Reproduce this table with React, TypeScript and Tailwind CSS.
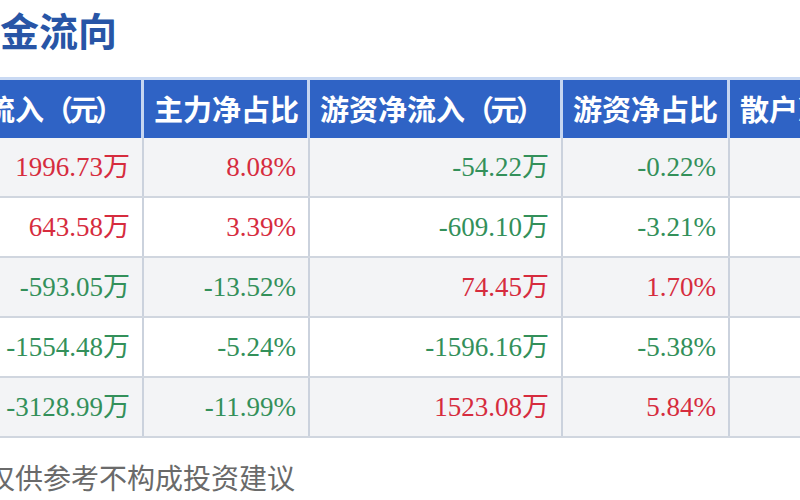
import React from "react";

type Cell = { v: string; up: boolean };

const rows: Cell[][] = [
  [{ v: "1996.73万", up: true }, { v: "8.08%", up: true }, { v: "-54.22万", up: false }, { v: "-0.22%", up: false }],
  [{ v: "643.58万", up: true }, { v: "3.39%", up: true }, { v: "-609.10万", up: false }, { v: "-3.21%", up: false }],
  [{ v: "-593.05万", up: false }, { v: "-13.52%", up: false }, { v: "74.45万", up: true }, { v: "1.70%", up: true }],
  [{ v: "-1554.48万", up: false }, { v: "-5.24%", up: false }, { v: "-1596.16万", up: false }, { v: "-5.38%", up: false }],
  [{ v: "-3128.99万", up: false }, { v: "-11.99%", up: false }, { v: "1523.08万", up: true }, { v: "5.84%", up: true }],
];

const cjk = { fontFamily: '"Noto Sans CJK SC", "Noto Sans", sans-serif' };
const serif = { fontFamily: '"Liberation Serif", "Noto Sans CJK SC", serif' };

function Head({ children }: { children: React.ReactNode }) {
  return (
    <div className="flex items-center pl-[10px] border-r-[3px] border-[#c6d6f0] text-white text-[29px] font-bold whitespace-nowrap overflow-hidden">
      {children}
    </div>
  );
}

function Yuan() {
  return <span className="tracking-[-3.5px]">（元）</span>;
}

export default function App() {
  return (
    <div className="w-[800px] h-[500px] overflow-hidden bg-white" style={cjk}>
      {/* title */}
      <div className="ml-[-39px] mt-[10px] text-[39px] leading-[39px] font-bold text-[#2855a6] whitespace-nowrap">
        资金流向
      </div>

      {/* table */}
      <div className="mt-[28px] ml-[-111px] w-[961px]">
        <div className="grid grid-cols-[255px_166px_253px_167px_120px] h-[61px] bg-[#2f63c5] border-t-[3px] border-[#c9d9f3]">
          <Head>主力净流入<Yuan /></Head>
          <Head>主力净占比</Head>
          <Head>游资净流入<Yuan /></Head>
          <Head>游资净占比</Head>
          <Head>散户净流入</Head>
        </div>
        {rows.map((r, i) => (
          <div
            key={i}
            className={`grid grid-cols-[255px_166px_253px_167px_120px] h-[60px] border-b-2 border-[#d0d6df] ${
              i % 2 === 0 ? "bg-[#f3f4f6]" : "bg-white"
            }`}
          >
            {r.map((c, j) => (
              <div
                key={j}
                className={`flex items-center justify-end pr-[12px] border-r-2 border-[#cbd2dd] text-[27px] ${
                  c.up ? "text-[#d62c3e]" : "text-[#33905a]"
                }`}
                style={serif}
              >
                {c.v}
              </div>
            ))}
            <div className="border-r-2 border-[#cbd2dd]" />
          </div>
        ))}
      </div>

      {/* footer */}
      <div className="ml-[-13px] mt-[25px] text-[28px] leading-[28px] text-[#6a6a6a] whitespace-nowrap">
        仅供参考不构成投资建议
      </div>
    </div>
  );
}
